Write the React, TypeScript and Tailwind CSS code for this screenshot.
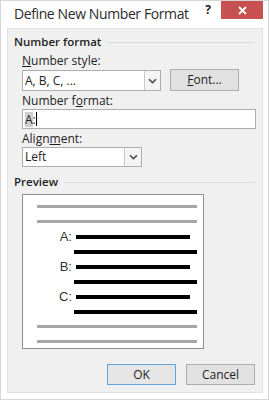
const Chevron: React.FC = () => (
  <svg width="9" height="6" viewBox="0 0 9 6" fill="none">
    <path d="M1 1.2 L4.5 4.6 L8 1.2" stroke="#4a4a4a" strokeWidth="1.6" />
  </svg>
);

const GroupHeading: React.FC<{ title: string; className?: string }> = ({ title, className }) => (
  <div className={`flex items-center h-[16px] pl-[6px] pr-[7px] ${className ?? ''}`}>
    <span className="font-semibold text-[11.5px] text-[#1e1e1e] whitespace-nowrap">{title}</span>
    <div className="flex-1 ml-[6px] h-px bg-[#dcdcdc]"></div>
  </div>
);

const PreviewRow: React.FC<{ label: string }> = ({ label }) => (
  <>
    <div className="h-[15px] flex items-center">
      <span className="w-[49px] text-right text-[13px] leading-none text-[#333] font-['Liberation_Sans',Arial,sans-serif]">
        {label}
      </span>
      <div className="ml-[4px] w-[114px] h-[4px] bg-black"></div>
    </div>
    <div className="h-[15px] flex items-center">
      <div className="ml-[51px] w-[123px] h-[4px] bg-black"></div>
    </div>
  </>
);

const GrayRow: React.FC = () => (
  <div className="h-[15px] flex items-center">
    <div className="ml-[14px] w-[160px] h-[3px] bg-[#a6a6a6]"></div>
  </div>
);

export default function App() {
  return (
    <div className="w-[269px] h-[400px] bg-white border border-[#d6d6d6] flex flex-col font-['Open_Sans','Noto_Sans',sans-serif] text-[#1e1e1e] text-[12px] overflow-hidden">
      {/* title bar */}
      <div className="h-[27px] flex items-start shrink-0">
        <span className="ml-[13px] mt-[3px] text-[14px] leading-[20px] text-[#2b2b2b] whitespace-nowrap tracking-[-0.4px]">
          Define New Number Format
        </span>
        <span className="ml-auto mt-[1px] font-bold text-[12px] leading-[16px]">?</span>
        <div className="ml-[10px] mr-[5px] w-[42px] h-[18px] bg-[#c75050] flex items-center justify-center">
          <svg width="9" height="9" viewBox="0 0 9 9">
            <path d="M1 1 L8 8 M8 1 L1 8" stroke="white" strokeWidth="1.8" />
          </svg>
        </div>
      </div>

      {/* body */}
      <div className="ml-[6px] mr-[5px] h-[365px] bg-[#f0f0f0] border border-[#e2e2e2] flex flex-col">
        <GroupHeading title="Number format" className="mt-[5px]" />

        <div className="ml-[14px] mt-[3px] leading-[16px]">
          <u>N</u>umber style:
        </div>
        <div className="ml-[14px] h-[22px] flex items-center">
          <div className="w-[139px] h-[21px] mt-[1px] bg-white border border-[#abadb3] flex">
            <span className="flex-1 pl-[2px] leading-[19px]">A, B, C, ...</span>
            <div className="w-[16px] border-l border-[#c9c9c9] bg-[#f4f4f4] flex items-center justify-center">
              <Chevron />
            </div>
          </div>
          <button className="ml-[9px] w-[69px] h-[22px] bg-[#e1e1e1] border border-[#adadad] leading-[20px]" type="button">
            <u>F</u>ont...
          </button>
        </div>

        <div className="ml-[14px] mt-[2px] leading-[16px]">
          Number f<u>o</u>rmat:
        </div>
        <div className="ml-[14px] w-[234px] h-[20px] bg-white border border-[#abadb3] flex items-center pl-[2px]">
          <span className="bg-[#cfcfcf] leading-[15px]">A</span>
          <span className="leading-[15px]">:</span>
          <span className="w-px h-[14px] bg-black"></span>
        </div>

        <div className="ml-[14px] mt-[2px] leading-[16px]">
          Align<u>m</u>ent:
        </div>
        <div className="ml-[14px] w-[120px] h-[20px] bg-white border border-[#abadb3] flex">
          <span className="flex-1 pl-[2px] leading-[18px]">Left</span>
          <div className="w-[17px] border-l border-[#c9c9c9] bg-[#f4f4f4] flex items-center justify-center">
            <Chevron />
          </div>
        </div>

        <GroupHeading title="Preview" className="mt-[7px]" />

        <div className="ml-[14px] mt-[4px] w-[182px] h-[155px] bg-white border border-[#8e8f8f] pt-[4px]">
          <GrayRow />
          <GrayRow />
          <PreviewRow label="A:" />
          <PreviewRow label="B:" />
          <PreviewRow label="C:" />
          <GrayRow />
          <GrayRow />
        </div>

        <div className="mt-[15px] mr-[7px] flex justify-end gap-[10px]">
          <button className="w-[69px] h-[21px] bg-[#e5e5e5] border border-[#5ea6e0] leading-[19px]" type="button">
            OK
          </button>
          <button className="w-[69px] h-[21px] bg-[#e1e1e1] border border-[#adadad] leading-[19px]" type="button">
            Cancel
          </button>
        </div>
      </div>
    </div>
  );
}
